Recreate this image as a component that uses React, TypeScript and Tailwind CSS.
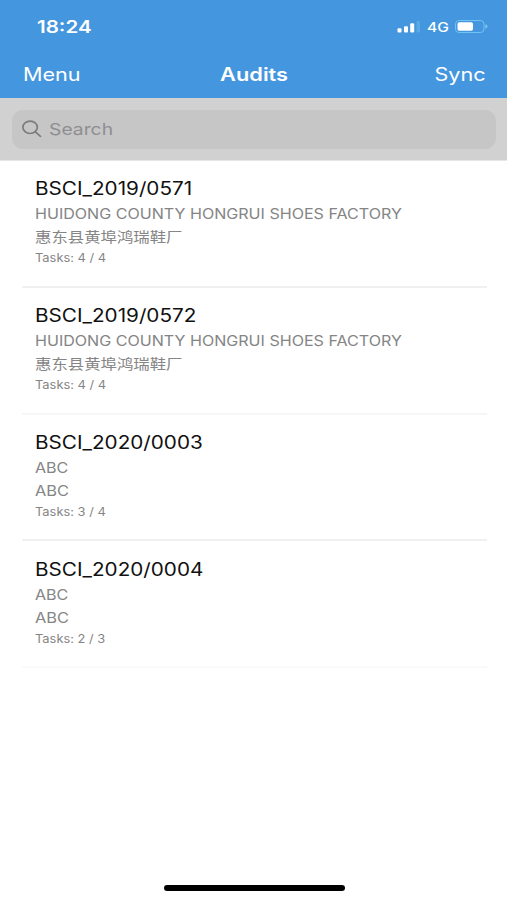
import { useState } from "react";

interface Audit {
  id: string;
  company: string;
  localName: string;
  done: number;
  total: number;
}

const AUDITS: Audit[] = [
  { id: "BSCI_2019/0571", company: "HUIDONG COUNTY HONGRUI SHOES FACTORY", localName: "惠东县黄埠鸿瑞鞋厂", done: 4, total: 4 },
  { id: "BSCI_2019/0572", company: "HUIDONG COUNTY HONGRUI SHOES FACTORY", localName: "惠东县黄埠鸿瑞鞋厂", done: 4, total: 4 },
  { id: "BSCI_2020/0003", company: "ABC", localName: "ABC", done: 3, total: 4 },
  { id: "BSCI_2020/0004", company: "ABC", localName: "ABC", done: 2, total: 3 },
];

// separators differ slightly in weight down the list
const DIVIDERS = ["bg-[#f0f0f0]", "bg-[#f6f6f6]", "bg-[#f0f0f0]", "bg-[#fafafa]"];

function StatusBar() {
  return (
    <div className="flex h-[53px] items-center justify-between pl-[37px] pr-[19px]">
      <span className="origin-left scale-x-[1.21] pt-[2px] text-[17px] font-semibold leading-none">18:24</span>
      <div className="flex items-center">
        <svg width="23" height="12" viewBox="0 0 23 12" fill="#fff">
          <rect x="0.5" y="7.3" width="4" height="4.2" rx="1" />
          <rect x="7" y="5.3" width="4" height="6.2" rx="1" />
          <rect x="13.2" y="2.3" width="4" height="9.2" rx="1" />
          <rect x="19.5" y="0" width="3.5" height="11.5" rx="1" fill="#7fd0f5" opacity="0.35" />
        </svg>
        <span className="ml-[7px] flex w-[28px] pt-px">
          <span className="origin-left scale-x-[1.2] text-[13px] font-medium leading-none">4G</span>
        </span>
        <svg width="33" height="13" viewBox="0 0 33 13" fill="none">
          <rect x="0.5" y="0.5" width="28.5" height="12" rx="3.5" stroke="#7fd0f5" strokeOpacity="0.75" />
          <rect x="2.5" y="2.3" width="15.5" height="8.4" rx="1.8" fill="#fff" />
          <path d="M30.5 4.3v4.4c1-.4 1.9-1.2 1.9-2.2s-.9-1.8-1.9-2.2z" fill="#7fd0f5" />
        </svg>
      </div>
    </div>
  );
}

function NavBar() {
  return (
    <div className="grid h-[45px] grid-cols-3 items-center pb-px pl-[23px] pr-[21px] text-[18px] leading-none">
      <button className="origin-left scale-x-[1.2] justify-self-start">Menu</button>
      <h1 className="scale-x-[1.21] justify-self-center font-semibold">Audits</h1>
      <button className="origin-right scale-x-[1.2] justify-self-end">Sync</button>
    </div>
  );
}

function AuditRow({ audit, divider }: { audit: Audit; divider: string }) {
  return (
    <li className="flex h-[126.8px] flex-col">
      <div className="flex flex-1 flex-col items-start pl-[35px] pt-[15.2px] text-[#858585]">
        <p className="origin-left scale-x-[1.15] whitespace-nowrap text-[18px] leading-[26px] text-[#111]">{audit.id}</p>
        <p className="origin-left scale-x-[1.148] whitespace-nowrap text-[14px] leading-[24px]">{audit.company}</p>
        <p className="origin-left scale-x-[1.17] whitespace-nowrap text-[14px] leading-[21px]">{audit.localName}</p>
        <p className="origin-left scale-x-[1.12] whitespace-nowrap text-[11.5px] leading-[22px]">
          Tasks: {audit.done} / {audit.total}
        </p>
      </div>
      <div className={`ml-[22px] mr-5 h-[2px] ${divider}`} />
    </li>
  );
}

export default function App() {
  const [query, setQuery] = useState("");
  const audits = AUDITS.filter((a) => a.id.toLowerCase().includes(query.toLowerCase()));

  return (
    <div className="flex h-[900px] w-[507px] flex-col overflow-hidden bg-white font-['Inter','Noto_Sans_CJK_SC',sans-serif]">
      <header className="bg-[#4496df] text-white">
        <StatusBar />
        <NavBar />
      </header>

      {/* Search */}
      <div className="h-[63px] border-b border-[#e6e6e6] bg-[#d1d1d1] pl-3 pr-[11px] pt-3">
        <label className="flex h-[39px] items-center overflow-hidden rounded-[11px] bg-[#c6c6c6] pb-px pl-[10px]">
          <svg width="21" height="18" viewBox="0 0 21 18" fill="none" stroke="#7c7c7f" strokeWidth="1.7" strokeLinecap="round">
            <ellipse cx="8.1" cy="7.3" rx="7.2" ry="6.2" />
            <path d="M13.3 11.8l5.2 4.5" />
          </svg>
          <input
            value={query}
            onChange={(e) => setQuery(e.target.value)}
            placeholder="Search"
            className="ml-[6px] w-[370px] origin-left scale-x-[1.17] bg-transparent text-[16.5px] leading-none outline-none placeholder:text-[#8e8e91]"
          />
        </label>
      </div>

      <ul className="flex-1">
        {audits.map((a, i) => (
          <AuditRow key={a.id} audit={a} divider={DIVIDERS[i]} />
        ))}
      </ul>

      {/* Home indicator */}
      <div className="mb-[9px] ml-[164px] h-[6px] w-[181px] rounded-full bg-black" />
    </div>
  );
}
